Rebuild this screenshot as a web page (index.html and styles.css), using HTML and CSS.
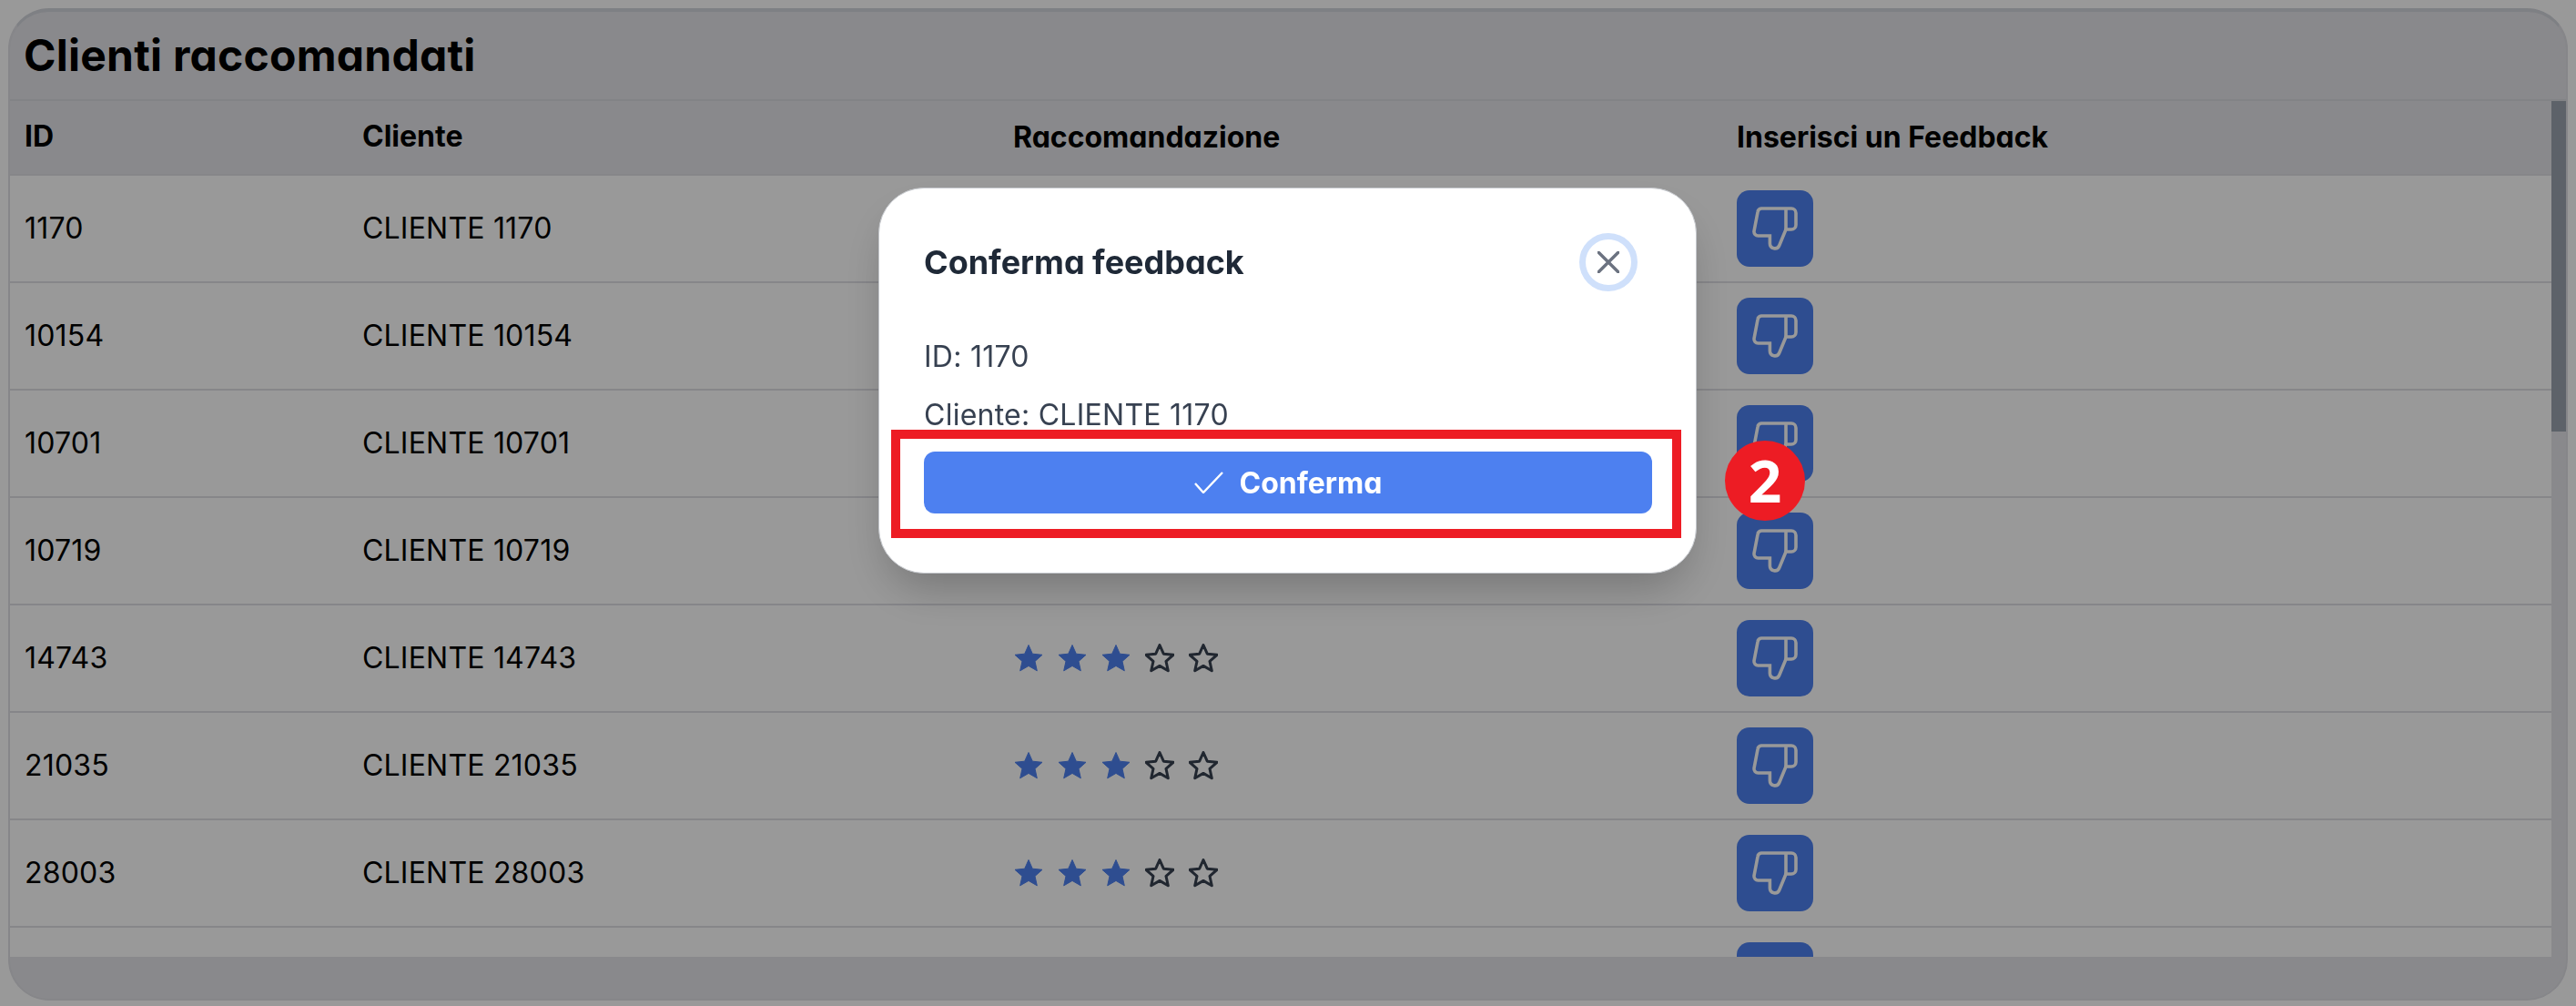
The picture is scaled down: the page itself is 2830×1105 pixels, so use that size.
FILE: index.html
```html
<!DOCTYPE html>
<html lang="it">
<head>
<meta charset="utf-8">
<title>Clienti raccomandati</title>
<link rel="stylesheet" href="styles.css">
</head>
<body>
<svg class="defs" width="0" height="0" aria-hidden="true">
  <defs>
    <path id="star" d="M16 1.5 L20.3 11.2 L31 12.3 L23 19.4 L25.3 29.8 L16 24.4 L6.7 29.8 L9 19.4 L1 12.3 L11.7 11.2 Z"/>
    <g id="thumb">
      <path d="M27 20 H60 a5 5 0 0 1 5 5 V38 a5 5 0 0 1 -5 5 H54 L46.8 60.5 a5.4 5.4 0 0 1 -10.4 -2 V50 H23.5 a4.5 4.5 0 0 1 -4.5 -5 L23 24 a4.5 4.5 0 0 1 4 -4 Z"/>
      <path d="M54 20 V43"/>
    </g>
  </defs>
</svg>
<main class="card">
  <h1 class="card-title">Clienti raccomandati</h1>
  <div class="scroll-area">
    <div class="table-wrap">
      <div class="row head-row">
        <div class="cell">ID</div><div class="cell">Cliente</div><div class="cell">Raccomandazione</div><div class="cell">Inserisci un Feedback</div>
      </div>
      <div class="row">
        <div class="cell">1170</div><div class="cell">CLIENTE 1170</div>
        <div class="cell stars"><svg class="star on"><use href="#star"/></svg><svg class="star on"><use href="#star"/></svg><svg class="star on"><use href="#star"/></svg><svg class="star"><use href="#star"/></svg><svg class="star"><use href="#star"/></svg></div>
        <div class="cell"><button class="thumb-btn"><svg viewBox="0 0 84 84"><use href="#thumb"/></svg></button></div>
      </div>
      <div class="row">
        <div class="cell">10154</div><div class="cell">CLIENTE 10154</div>
        <div class="cell stars"><svg class="star on"><use href="#star"/></svg><svg class="star on"><use href="#star"/></svg><svg class="star on"><use href="#star"/></svg><svg class="star"><use href="#star"/></svg><svg class="star"><use href="#star"/></svg></div>
        <div class="cell"><button class="thumb-btn"><svg viewBox="0 0 84 84"><use href="#thumb"/></svg></button></div>
      </div>
      <div class="row">
        <div class="cell">10701</div><div class="cell">CLIENTE 10701</div>
        <div class="cell stars"><svg class="star on"><use href="#star"/></svg><svg class="star on"><use href="#star"/></svg><svg class="star on"><use href="#star"/></svg><svg class="star"><use href="#star"/></svg><svg class="star"><use href="#star"/></svg></div>
        <div class="cell"><button class="thumb-btn"><svg viewBox="0 0 84 84"><use href="#thumb"/></svg></button></div>
      </div>
      <div class="row">
        <div class="cell">10719</div><div class="cell">CLIENTE 10719</div>
        <div class="cell stars"><svg class="star on"><use href="#star"/></svg><svg class="star on"><use href="#star"/></svg><svg class="star on"><use href="#star"/></svg><svg class="star"><use href="#star"/></svg><svg class="star"><use href="#star"/></svg></div>
        <div class="cell"><button class="thumb-btn"><svg viewBox="0 0 84 84"><use href="#thumb"/></svg></button></div>
      </div>
      <div class="row">
        <div class="cell">14743</div><div class="cell">CLIENTE 14743</div>
        <div class="cell stars"><svg class="star on"><use href="#star"/></svg><svg class="star on"><use href="#star"/></svg><svg class="star on"><use href="#star"/></svg><svg class="star"><use href="#star"/></svg><svg class="star"><use href="#star"/></svg></div>
        <div class="cell"><button class="thumb-btn"><svg viewBox="0 0 84 84"><use href="#thumb"/></svg></button></div>
      </div>
      <div class="row">
        <div class="cell">21035</div><div class="cell">CLIENTE 21035</div>
        <div class="cell stars"><svg class="star on"><use href="#star"/></svg><svg class="star on"><use href="#star"/></svg><svg class="star on"><use href="#star"/></svg><svg class="star"><use href="#star"/></svg><svg class="star"><use href="#star"/></svg></div>
        <div class="cell"><button class="thumb-btn"><svg viewBox="0 0 84 84"><use href="#thumb"/></svg></button></div>
      </div>
      <div class="row">
        <div class="cell">28003</div><div class="cell">CLIENTE 28003</div>
        <div class="cell stars"><svg class="star on"><use href="#star"/></svg><svg class="star on"><use href="#star"/></svg><svg class="star on"><use href="#star"/></svg><svg class="star"><use href="#star"/></svg><svg class="star"><use href="#star"/></svg></div>
        <div class="cell"><button class="thumb-btn"><svg viewBox="0 0 84 84"><use href="#thumb"/></svg></button></div>
      </div>
      <div class="row">
        <div class="cell"></div><div class="cell"></div><div class="cell"></div>
        <div class="cell"><button class="thumb-btn"><svg viewBox="0 0 84 84"><use href="#thumb"/></svg></button></div>
      </div>
    </div>
    <div class="scrollbar"><div class="scroll-thumb"></div></div>
  </div>
  <div class="card-foot"></div>
</main>
<div class="overlay">
  <section class="modal">
    <header class="modal-head">
      <h2 class="modal-title">Conferma feedback</h2>
      <button class="close-btn"><svg viewBox="0 0 24 24"><path d="M1 1 L23 23 M23 1 L1 23"/></svg></button>
    </header>
    <p class="modal-line first">ID: 1170</p>
    <p class="modal-line">Cliente: CLIENTE 1170</p>
    <button class="confirm-btn"><svg viewBox="0 0 32 24"><path d="M1 13 L10 23 L31 1"/></svg><span>Conferma</span></button>
    <div class="callout-box"></div>
    <div class="callout-badge">2</div>
  </section>
</div>
</body>
</html>
```
FILE: styles.css
```css
* { box-sizing: border-box; }
html, body { margin: 0; height: 100%; }
body {
  background: #fff;
  padding: 9px 9px 6px 9px;
  font-family: Inter, "Liberation Sans", sans-serif;
  font-feature-settings: "cv11" 1;
  color: #000;
  overflow: hidden;
}
.defs { position: absolute; }
.card {
  height: 1090px;
  display: flex;
  flex-direction: column;
  border: 2px solid #dfdfe5;
  border-top: 4px solid #d3d5dc;
  border-radius: 45px;
  overflow: hidden;
  background: #e4e5e9;
}
.card-title {
  margin: 0;
  height: 98px;
  padding: 18px 0 0 15px;
  font-size: 48px;
  line-height: 60px;
  font-weight: 700;
  letter-spacing: .25px;
  border-bottom: 2px solid #d9dae0;
  flex: none;
}
.scroll-area { flex: 1; display: flex; min-height: 0; background: #fff; }
.table-wrap { flex: 1; min-width: 0; overflow: hidden; }
.row {
  display: grid;
  grid-template-columns: 371px 715px 795px 1fr;
  height: 118px;
  align-items: center;
  border-bottom: 2px solid #dfdfe5;
  font-size: 32px;
  letter-spacing: .2px;
}
.head-row {
  height: 82px;
  background: #e4e5e9;
  font-weight: 700;
  line-height: 1;
  letter-spacing: 0;
}
.cell { padding-left: 16px; }
.cell:nth-child(-n+2) { padding-bottom: 2px; }
.stars { display: flex; gap: 16px; padding-left: 17px; }
.star { width: 32px; height: 32px; fill: none; stroke: #374151; stroke-width: 3; stroke-linejoin: round; }
.star.on { fill: #4d80f0; stroke: #4d80f0; stroke-width: 1; }
.thumb-btn {
  display: block;
  width: 84px;
  height: 84px;
  padding: 0;
  border: 0;
  border-radius: 14px;
  background: #4d80f0;
}
.thumb-btn svg { display: block; width: 84px; height: 84px; fill: none; stroke: #fff; stroke-width: 3.6; }
.scrollbar { width: 16px; background: #e4e5e9; flex: none; }
.scroll-thumb { height: 363px; background: #9ca3af; }
.card-foot { height: 46px; flex: none; background: #e4e5e9; }
.overlay {
  position: fixed;
  inset: 0;
  background: rgba(0, 0, 0, .4);
  display: flex;
  justify-content: center;
  align-items: flex-start;
  padding: 206px 1px 0 0;
}
.modal {
  position: relative;
  width: 899px;
  height: 424px;
  padding: 49px 50px 0 49px;
  background: #fff;
  border-radius: 50px;
  border: 1px solid #c4c7cc;
  box-shadow: 0 25px 50px -12px rgba(0, 0, 0, .25);
}
.modal-head { display: flex; justify-content: space-between; align-items: center; height: 64px; padding-right: 14px; }
.modal-title { margin: 0; font-size: 36px; font-weight: 700; color: #1f2937; }
.close-btn {
  width: 64px;
  height: 64px;
  padding: 0;
  border: 7px solid #cfe0fb;
  border-radius: 50%;
  background: #fff;
  display: flex;
  align-items: center;
  justify-content: center;
}
.close-btn svg { width: 24px; height: 24px; fill: none; stroke: #6b7280; stroke-width: 3.4; stroke-linecap: round; }
.modal-line { margin: 0; height: 64px; font-size: 32px; line-height: 64px; color: #374151; letter-spacing: .25px; }
.modal-line.first { margin-top: 40px; }
.confirm-btn {
  position: absolute;
  left: 49px;
  top: 289px;
  width: 800px;
  height: 68px;
  border: 0;
  border-radius: 12px;
  background: #4d80f0;
  color: #fff;
  font: inherit;
  font-size: 32px;
  font-weight: 700;
  font-feature-settings: inherit;
  display: flex;
  align-items: center;
  justify-content: center;
  gap: 18px;
}
.confirm-btn svg { width: 32px; height: 24px; fill: none; stroke: #fff; stroke-width: 2.4; }
.callout-box {
  position: absolute;
  left: 13px;
  top: 265px;
  width: 868px;
  height: 119px;
  border: 10px solid #ed1c24;
}
.callout-badge {
  position: absolute;
  left: 929px;
  top: 277px;
  width: 88px;
  height: 88px;
  border-radius: 50%;
  background: #ed1c24;
  color: #fff;
  font-family: "Noto Sans", sans-serif;
  font-size: 64px;
  font-weight: 700;
  line-height: 88px;
  text-align: center;
}
```
